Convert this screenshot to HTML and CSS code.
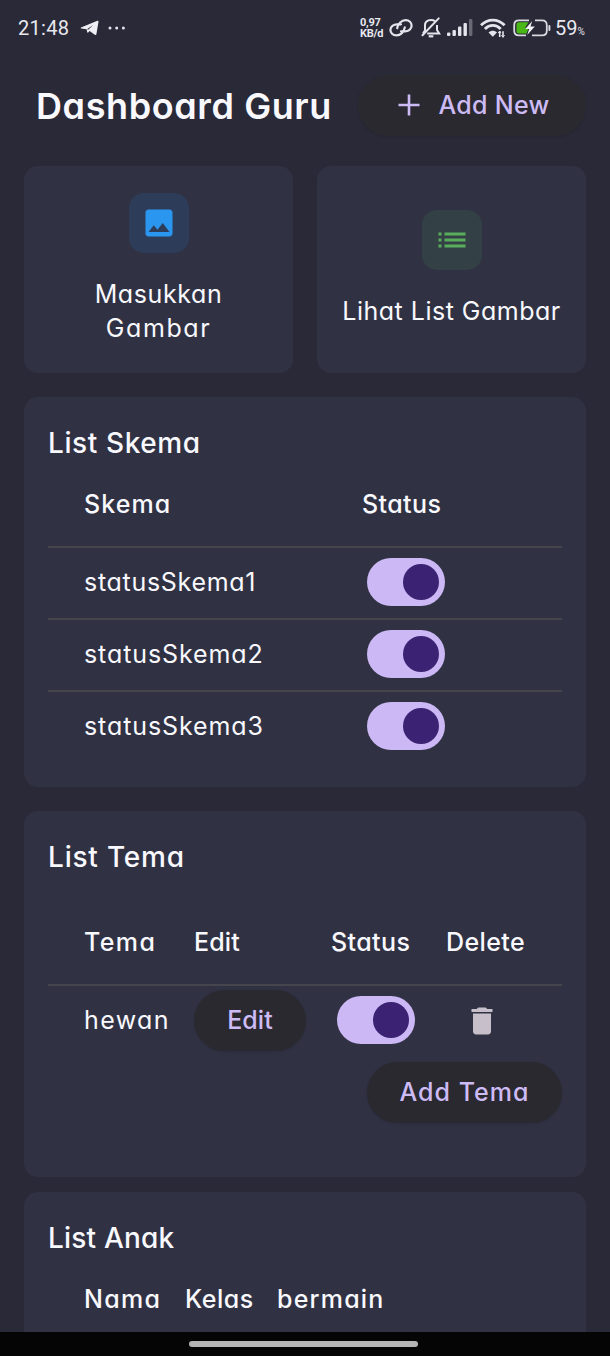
FILE: index.html
```html
<!DOCTYPE html>
<html lang="id">
<head>
<meta charset="utf-8">
<title>Dashboard Guru</title>
<link rel="stylesheet" href="styles.css">
</head>
<body>
<div class="screen">
  <header class="statusbar">
    <span class="clock">21:48</span>
    <svg class="telegram" width="20" height="16" viewBox="0 0 20 16"><path d="M1 7.6 L17.4 .7 Q18.7 .4 18.5 1.7 L16.4 14.3 Q16 15.6 14.8 14.8 L9.6 11.1 L8.2 12.5 Q7.4 13 7.2 12 L6.6 9.2 L1.1 8.5 Q.2 8 1 7.6Z" fill="#eeeef4"/><path d="M6.9 9.3 L13.2 5 L8.5 9.6" fill="#292937"/></svg>
    <svg class="dots" width="18" height="4" viewBox="0 0 18 4" fill="#e4e4ec"><circle cx="2" cy="2" r="1.5"/><circle cx="8.7" cy="2" r="1.5"/><circle cx="15.4" cy="2" r="1.5"/></svg>
    <span class="spacer"></span>
    <span class="speed"><span>0,97</span><span>KB/d</span></span>
    <svg class="link" width="24" height="20" viewBox="0 0 24 20" fill="none" stroke="#e4e4ec" stroke-width="2.2" stroke-linecap="round"><path d="M15.8 9.4C15 13.9 11.5 17.4 7.5 17.4C3.7 17.4 1.4 15 1.4 11.8C1.4 8.4 4.6 6.3 8 6.3H12"/><path d="M8.2 10.2C9 5.7 12.5 2.2 16.5 2.2C20.3 2.2 22.6 4.6 22.6 7.8C22.6 11.2 19.4 13.3 16 13.3H12"/></svg>
    <svg class="bell" width="20" height="22" viewBox="0 0 20 22" fill="none" stroke="#e4e4ec" stroke-width="2"><path d="M4 15 V8.6C4 5 6.4 3 10 3C11.6 3 13 3.4 14 4.2M16 8V13L18.2 16.6H6.2M4.2 13L2 16.6"/><path d="M17.7 1.4L1.5 18.2" stroke-linecap="round"/><path d="M7.7 19.3H12.3" stroke-width="2.2"/></svg>
    <svg class="signal" width="27" height="18" viewBox="0 0 27 18" fill="#e4e4ec"><rect x="0" y="13.5" width="3.4" height="3.5" rx="1"/><rect x="5.5" y="11" width="3.4" height="6" rx="1"/><rect x="11" y="7.5" width="3.4" height="9.5" rx="1"/><rect x="16.5" y="4" width="3.4" height="13" rx="1"/><rect x="22" y="0" width="3.4" height="17" rx="1" fill="#696975"/></svg>
    <svg class="wifi" width="26" height="20" viewBox="0 0 26 20" fill="none" stroke="#e4e4ec" stroke-width="2.8"><path d="M1 7.2C7.6.3 18 .3 24.6 7.2"/><path d="M4.9 11C9.4 6.2 16.2 6.2 20.7 11"/><path d="M8.5 14.5C11 12 14.6 12 17 14.5L12.8 18.8Z" fill="#e4e4ec" stroke="none"/><path d="M19.7 13.3V19M23 13.3V19" stroke-width="1.6"/><path d="M18.2 15L19.7 13L21 15M21.5 17.2L23 19.4L24.5 17.2" stroke-width="1"/></svg>
    <svg class="battery" width="38" height="18" viewBox="0 0 38 18"><path d="M6 3.2H15.5L12 9H15.6L13.5 14.5H6Q3.5 14.5 3.5 12V5.7Q3.5 3.2 6 3.2Z" fill="#49b817"/><path d="M16 1.3H6Q1.2 1.3 1.2 6V11.7Q1.2 16.4 6 16.4H13M22 1.3H29Q33.8 1.3 33.8 6V11.7Q33.8 16.4 29 16.4H19" fill="none" stroke="#d8d8e0" stroke-width="1.8"/><path d="M19.2 2L12.3 10H16.2L14.2 16L21.8 7.5H17.5Z" fill="#f1f1f4"/><rect x="35.4" y="6" width="2" height="6" rx="1" fill="#d8d8e0"/></svg>
    <span class="percent">59<small>%</small></span>
  </header>

  <main class="content">
    <div class="heading">
      <h1>Dashboard Guru</h1>
      <button class="pill pill-new"><svg width="22" height="22" viewBox="0 0 22 22" stroke="#cdbbf5" stroke-width="2.6"><path d="M11 .5V21.5M.5 11H21.5"/></svg><span>Add New</span></button>
    </div>

    <section class="tiles">
      <div class="card tile">
        <span class="badge blue"><svg width="36" height="36" viewBox="0 0 24 24" fill="#2b96f0"><path d="M21 19V5c0-1.1-.9-2-2-2H5c-1.1 0-2 .9-2 2v14c0 1.1.9 2 2 2h14c1.1 0 2-.9 2-2zM8.5 13.5l2.5 3.01L14.5 12l4.5 6H5l3.5-4.5z"/></svg></span>
        <span class="tile-label"><span class="l1">Masukkan</span><br><span class="l2">Gambar</span></span>
      </div>
      <div class="card tile">
        <span class="badge green"><svg width="36" height="36" viewBox="0 0 24 24" fill="#58ad5d"><path d="M3 13h2v-2H3v2zm0 4h2v-2H3v2zm0-8h2V7H3v2zm4 4h14v-2H7v2zm0 4h14v-2H7v2zM7 7v2h14V7H7z"/></svg></span>
        <span class="tile-label l3">Lihat List Gambar</span>
      </div>
    </section>

    <section class="card panel skema">
      <h2>List Skema</h2>
      <div class="row head"><span class="s-skema">Skema</span><span class="status">Status</span></div>
      <div class="row"><span class="name first">statusSkema1</span><i class="switch"></i></div>
      <div class="row"><span class="name">statusSkema2</span><i class="switch"></i></div>
      <div class="row"><span class="name">statusSkema3</span><i class="switch"></i></div>
    </section>

    <section class="card panel tema">
      <h2>List Tema</h2>
      <div class="row head"><span class="t-tema">Tema</span><span class="t-edit">Edit</span><span class="status">Status</span><span class="t-delete">Delete</span></div>
      <div class="row"><span class="t-hewan">hewan</span><button class="pill pill-edit"><span>Edit</span></button><i class="switch"></i>
        <svg class="trash" width="36" height="36" viewBox="0 0 24 24" fill="#c7c0ca"><path d="M6 19c0 1.1.9 2 2 2h8c1.1 0 2-.9 2-2V7H6v12zM19 4h-3.5l-1-1h-5l-1 1H5v2h14V4z"/></svg>
      </div>
      <button class="pill pill-tema"><span>Add Tema</span></button>
    </section>

    <section class="card panel anak">
      <h2>List Anak</h2>
      <div class="row head"><span class="a-nama">Nama</span><span class="a-kelas">Kelas</span><span class="a-bermain">bermain</span></div>
    </section>
  </main>
  <footer class="navbar"><span></span></footer>
</div>
</body>
</html>
```
FILE: styles.css
```css
* { box-sizing: border-box; }
body {
  margin: 0;
  background: #292937;
  color: #f8f8fd;
  font-family: Inter, "Open Sans", sans-serif;
  font-feature-settings: "cv11" 1;
}
.screen { width: 610px; height: 1356px; overflow: hidden; display: flex; flex-direction: column; }
.screen svg { display: block; flex: none; }

.statusbar { height: 56px; flex: none; display: flex; align-items: center; padding: 0 24px 0 18px; font-family: Roboto, sans-serif; color: #e8e8f0; }
.clock { font-size: 20px; width: 62px; letter-spacing: .3px; }
.dots { margin-left: 8px; }
.spacer { flex: 1; }
.speed { display: flex; flex-direction: column; width: 27px; font-size: 11px; line-height: 11px; font-weight: 700; letter-spacing: -.3px; margin-right: 3px; }
.link { margin-right: 3px; margin-left: -1px; }
.bell { margin-left: 5px; }
.signal { margin-left: 6px; }
.wifi { margin-left: 6px; }
.battery { margin-left: 7px; }
.percent { font-size: 20px; margin-left: 4px; width: 31px; white-space: nowrap; }
.percent small { font-size: 10px; }

.content { flex: 1; min-height: 0; overflow: hidden; padding: 18px 24px 0; display: flex; flex-direction: column; }
.heading { height: 62px; flex: none; display: flex; align-items: center; justify-content: space-between; padding-left: 12px; margin-bottom: 29.5px; }
h1 { margin: 0; font-size: 36px; font-weight: 600; line-height: 52px; letter-spacing: .6px; padding-top: 1px; white-space: nowrap; }
.pill { border: 0; padding: 0 0 1px; height: 61px; border-radius: 31px; background: #2b2930; color: #cdbbf5; font: 500 25px Inter, sans-serif; font-feature-settings: "cv11" 1; display: flex; align-items: center; justify-content: center; white-space: nowrap; flex: none; box-shadow: 0 1px 2px #20202b55; }
.pill-new { width: 228px; gap: 18px; padding-left: 4px; letter-spacing: .3px; }

.card { background: #303244; border-radius: 14px; flex: none; }
.tiles { display: grid; grid-template-columns: 1fr 1fr; gap: 24px; height: 207px; flex: none; margin-bottom: 24px; }
.tile { display: flex; flex-direction: column; align-items: center; justify-content: center; gap: 24px; }
.badge { width: 60px; height: 60px; border-radius: 15px; display: grid; place-items: center; }
.blue { background: #2d3d59; }
.green { background: #334146; }
.tile-label { font-size: 25px; line-height: 34.5px; text-align: center; white-space: nowrap; }
.l1 { letter-spacing: .6px; }
.l2 { letter-spacing: 1.6px; }
.l3 { letter-spacing: .5px; }

.panel { padding: 24px; }
.panel h2 { margin: 0; height: 41px; line-height: 44px; font-size: 28px; font-weight: 500; letter-spacing: .6px; }
.panel.tema h2 { letter-spacing: .8px; }
.panel.anak h2 { letter-spacing: .2px; }
.skema { height: 390px; margin-bottom: 24px; }
.tema { height: 366px; margin-bottom: 15px; display: flex; flex-direction: column; }
.anak { height: 300px; }
.row { display: grid; align-items: center; height: 72px; padding-left: 36px; font-size: 25px; flex: none; white-space: nowrap; border-top: 2px solid #45454e; }
.row > span { padding-bottom: 2px; }
.row.head { height: 84px; font-weight: 500; border-top: 0; }
.row.head > span { padding-bottom: 0; }
.skema .row { grid-template-columns: 278px 1fr; }
.skema .switch { margin-left: 5px; }
.s-skema { letter-spacing: 1.1px; }
.status { letter-spacing: .4px; }
.name { letter-spacing: .9px; }
.name.first { letter-spacing: .7px; }
.tema .row { grid-template-columns: 110px 137px 115px 1fr; }
.tema .head { margin-top: 24px; }
.tema .switch { margin-left: 6px; }
.t-tema { letter-spacing: 1.4px; }
.t-edit { letter-spacing: .1px; }
.t-delete { letter-spacing: .4px; }
.t-hewan { letter-spacing: 1.4px; }
.anak .row { grid-template-columns: 101px 92px 1fr; }
.a-nama { letter-spacing: 1.3px; }
.a-kelas { letter-spacing: .5px; }
.a-bermain { letter-spacing: 1.2px; }
.switch { display: flex; justify-content: flex-end; align-items: center; width: 78px; height: 48px; margin-bottom: 1px; padding-right: 6px; border-radius: 24px; background: #cbb8f5; }
.switch::after { content: ""; width: 36px; height: 36px; border-radius: 50%; background: #3b2272; }
.pill-edit { width: 112px; letter-spacing: .1px; }
.trash { margin-left: 18px; }
.pill-tema { width: 195px; align-self: flex-end; margin-top: 6px; letter-spacing: 1px; }

.navbar { height: 24px; flex: none; background: #050506; display: flex; align-items: center; justify-content: center; }
.navbar span { width: 229px; height: 6px; border-radius: 3px; background: #b5b5b5; margin-right: 3px; }
```
